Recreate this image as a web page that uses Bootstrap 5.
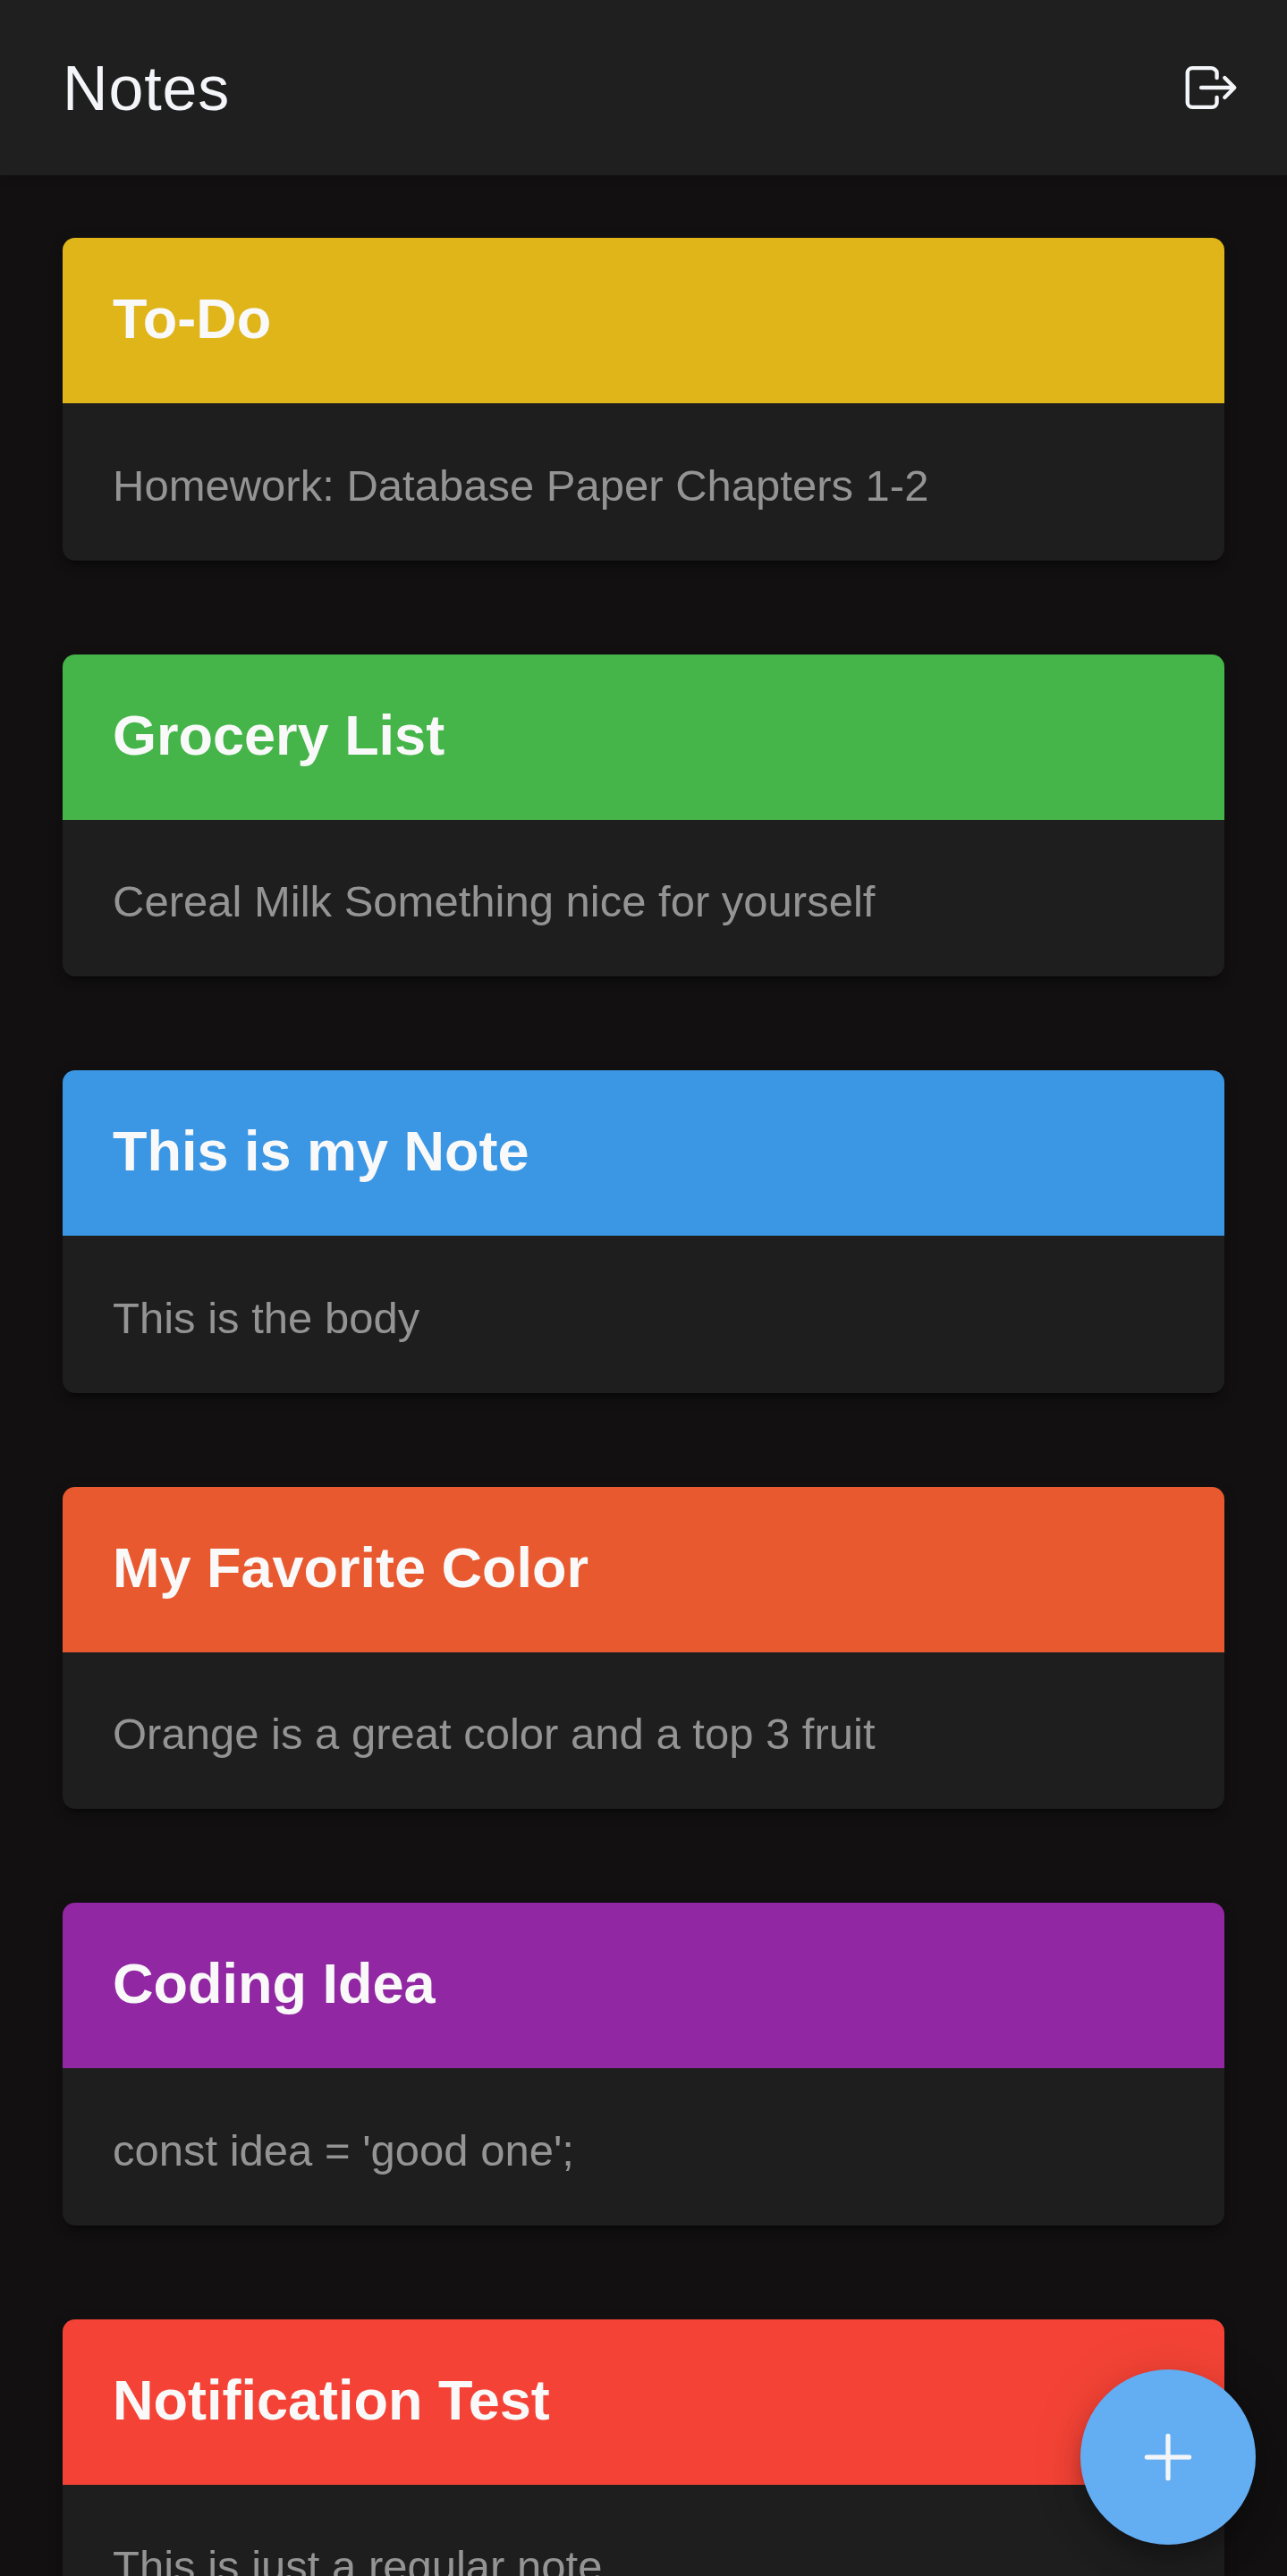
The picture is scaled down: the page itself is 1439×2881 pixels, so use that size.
<!DOCTYPE html>
<html lang="en">
<head>
<meta charset="utf-8">
<meta name="viewport" content="width=device-width, initial-scale=1">
<title>Notes</title>
<link href="https://cdn.jsdelivr.net/npm/bootstrap@5.3.0/dist/css/bootstrap.min.css" rel="stylesheet">
<style>
html, body { height: 100%; }
body { background: #121011; font-family: "Liberation Sans", Arial, sans-serif; }
.notes-app { height: 100vh; }
.app-bar { height: 196px; padding: 0 50px 0 70px; background: #1f1f1f; color: #f4f5f8; z-index: 2;
  box-shadow: 0 2px 10px 0 rgba(0,0,0,.15); }
.app-title { font-size: 70px; line-height: 84px; padding-top: 1px; letter-spacing: .0125em; font-weight: 400; }
.app-bar svg { width: 70px; height: 70px; }
.stroke-icon { fill: none; stroke: #f4f5f8; stroke-width: 32; stroke-linecap: round; stroke-linejoin: round; display: block; }
.note-list { padding: 70px 70.5px 0 70px; gap: 105px; }
.note { height: 360.5px; border: 0; border-radius: 14px; background: #1e1e1e; overflow: hidden;
  box-shadow: 0 10.5px 3.5px -7px rgba(0,0,0,.2), 0 7px 7px 0 rgba(0,0,0,.14), 0 3.5px 17.5px 0 rgba(0,0,0,.12); }
.note-head { height: 185.3px; padding: 52px 56px 0; border: 0; }
.note-name { font-size: 63px; line-height: 76px; font-weight: 700; color: #f9f9f9; }
.note-text { padding: 56.5px 56px 0; font-size: 49px; line-height: 70px; color: #949494; }
.bg-yellow { background: #dfb51a; }
.bg-green { background: #45b549; }
.bg-blue { background: #3b97e3; }
.bg-orange { background: #e8592f; }
.bg-purple { background: #9127a2; }
.bg-red { background: #f44336; }
.add-btn { right: 35.5px; bottom: 35.5px; width: 196px; height: 196px; background: #63adf2; z-index: 3;
  box-shadow: 0 10.5px 17.5px -3.5px rgba(0,0,0,.2), 0 21px 35px 0 rgba(0,0,0,.14), 0 3.5px 63px 0 rgba(0,0,0,.12); }
.add-btn svg { width: 84px; height: 84px; }
</style>
</head>
<body>
<div class="notes-app position-relative overflow-hidden">
  <header class="app-bar position-relative d-flex align-items-center justify-content-between">
    <h1 class="app-title m-0">Notes</h1>
    <button class="btn p-0 border-0" type="button" aria-label="Log out">
      <svg class="stroke-icon" viewBox="0 0 512 512"><path d="M304 336v40a40 40 0 01-40 40H104a40 40 0 01-40-40V136a40 40 0 0140-40h152c22.09 0 48 17.91 48 40v40M368 336l80-80-80-80M176 256h256"/></svg>
    </button>
  </header>
  <main class="note-list d-flex flex-column">
    <article class="card note flex-shrink-0"><div class="note-head bg-yellow"><h2 class="note-name m-0">To-Do</h2></div><p class="note-text m-0">Homework: Database Paper Chapters 1-2</p></article>
    <article class="card note flex-shrink-0"><div class="note-head bg-green"><h2 class="note-name m-0">Grocery List</h2></div><p class="note-text m-0">Cereal Milk Something nice for yourself</p></article>
    <article class="card note flex-shrink-0"><div class="note-head bg-blue"><h2 class="note-name m-0">This is my Note</h2></div><p class="note-text m-0">This is the body</p></article>
    <article class="card note flex-shrink-0"><div class="note-head bg-orange"><h2 class="note-name m-0">My Favorite Color</h2></div><p class="note-text m-0">Orange is a great color and a top 3 fruit</p></article>
    <article class="card note flex-shrink-0"><div class="note-head bg-purple"><h2 class="note-name m-0">Coding Idea</h2></div><p class="note-text m-0">const idea = 'good one';</p></article>
    <article class="card note flex-shrink-0"><div class="note-head bg-red"><h2 class="note-name m-0">Notification Test</h2></div><p class="note-text m-0">This is just a regular note</p></article>
  </main>
  <button class="add-btn btn rounded-circle border-0 p-0 position-absolute d-flex align-items-center justify-content-center" type="button" aria-label="Add note">
    <svg class="stroke-icon" viewBox="0 0 512 512"><path d="M256 112v288M400 256H112"/></svg>
  </button>
</div>
<script src="https://cdn.jsdelivr.net/npm/bootstrap@5.3.0/dist/js/bootstrap.bundle.min.js"></script>
</body>
</html>
